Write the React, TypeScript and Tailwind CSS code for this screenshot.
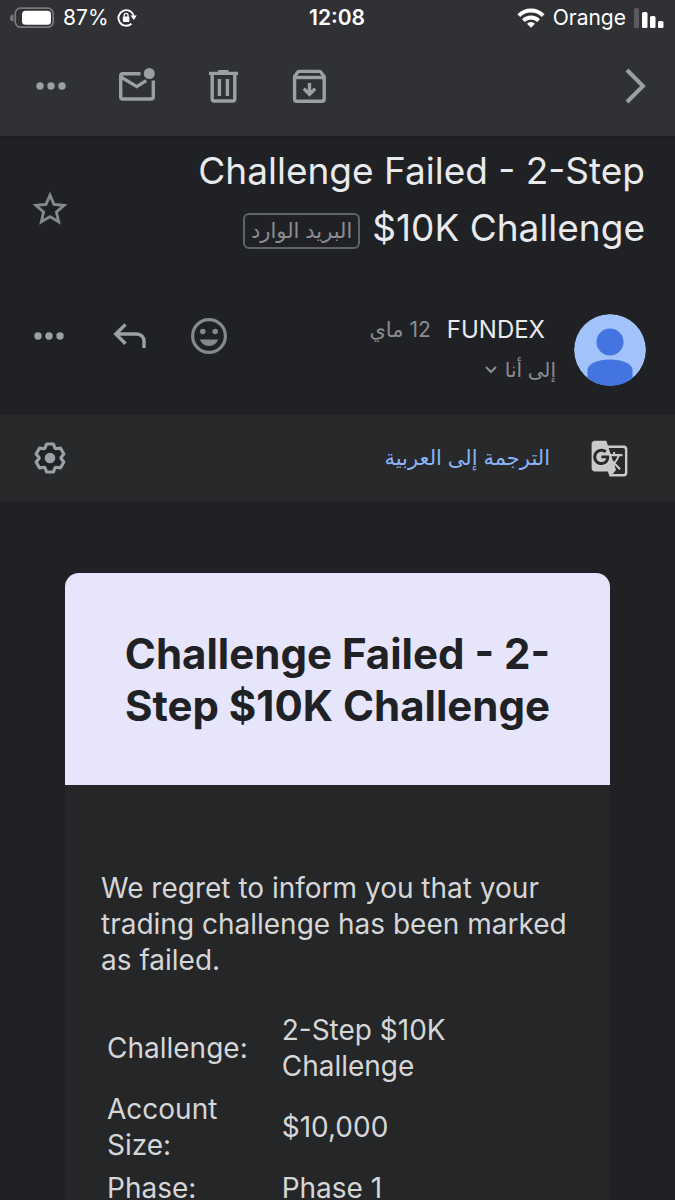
import React from 'react';
import { MdGTranslate, MdStarOutline } from 'react-icons/md';

const details = [
  { label: 'Challenge:', value: '2-Step $10K Challenge' },
  { label: 'Account Size:', value: '$10,000' },
  { label: 'Phase:', value: 'Phase 1' },
];

// One tooth of the settings gear, repeated every 60 degrees
const tooth = [
  [-5, -9.8],
  [-3.4, -14],
  [3.4, -14],
  [5, -9.8],
];

const gearPoints = Array.from({ length: 6 }, (_, i) => {
  const a = (i * Math.PI) / 3;
  return tooth
    .map(([x, y]) => `${x * Math.cos(a) - y * Math.sin(a)},${x * Math.sin(a) + y * Math.cos(a)}`)
    .join(' ');
}).join(' ');

const DotsIcon = () => (
  <svg width="30" height="8" viewBox="0 0 30 8" fill="currentColor">
    <circle cx="4" cy="4" r="3.7" />
    <circle cx="15" cy="4" r="3.7" />
    <circle cx="26" cy="4" r="3.7" />
  </svg>
);

const UnreadIcon = () => (
  <svg width="38" height="38" viewBox="118 67 38 38" fill="none" stroke="currentColor" strokeWidth="3.4">
    <path d="M140.5 73.7H123a2.3 2.3 0 0 0-2.3 2.3V96.700a2.3 2.3 0 0 0 2.3 2.3h28a2.3 2.3 0 0 0 2.3-2.3V80.500" />
    <path d="M121 77l15.800 9.600 9.400-6" />
    <circle cx="149.3" cy="73.5" r="5.5" fill="currentColor" stroke="none" />
  </svg>
);

const TrashIcon = () => (
  <svg width="34" height="36" viewBox="206 68 34 36" fill="none" stroke="currentColor" strokeWidth="3.4">
    <path d="M209 73.400h29M218 71.600h10.500" />
    <path d="M212.2 74v24.800a2.2 2.2 0 0 0 2.2 2.2h18.200a2.2 2.2 0 0 0 2.2-2.2V74" />
    <path d="M219.4 79v17M227.4 79v17" />
  </svg>
);

const ArchiveIcon = () => (
  <svg width="36" height="36" viewBox="291 68 36 36" fill="none" stroke="currentColor" strokeWidth="3.4">
    <path d="M294.6 76.500l3.200-4.500a1.500 1.500 0 0 1 1.200-.6h20.500a1.500 1.500 0 0 1 1.200.6l3.500 4.500V99a2.300 2.300 0 0 1-2.300 2.300h-25a2.300 2.300 0 0 1-2.300-2.300z" />
    <path d="M295 77.500h29" />
    <path d="M309.5 83v10M303.800 88.600l5.700 5.700 5.700-5.700" />
  </svg>
);

const ReplyIcon = () => (
  <svg width="34" height="34" viewBox="0 0 34 34" fill="none" stroke="currentColor" strokeWidth="3.4">
    <path d="M13.5 5.500L3.800 15l9.700 9.700M4 15h21a7 7 0 0 1 7 7v7" />
  </svg>
);

const SmileIcon = () => (
  <svg width="38" height="38" viewBox="0 0 38 38">
    <circle cx="19" cy="19" r="16.4" fill="none" stroke="currentColor" strokeWidth="3.2" />
    <circle cx="12.8" cy="14.5" r="2.8" fill="currentColor" />
    <circle cx="25.2" cy="14.5" r="2.8" fill="currentColor" />
    <path d="M9.800 22.500h18.400a9.800 9.800 0 0 1-18.400 0z" fill="currentColor" />
  </svg>
);

const GearIcon = () => (
  <svg width="34" height="34" viewBox="-17 -17 34 34">
    <polygon points={gearPoints} fill="#202124" stroke="currentColor" strokeWidth="3.2" strokeLinejoin="round" />
    <circle r="5.3" fill="currentColor" />
  </svg>
);

const StatusBar = () => (
  <div dir="ltr" className="grid h-9 grid-cols-3 items-center pl-[10px] pr-[11px] text-[21px] leading-6 text-white">
    <div className="flex items-center gap-2">
      <svg width="45" height="22" viewBox="10 7 45 22">
        <path d="M13.500 14.500a3.500 3.500 0 0 0 0 7z" fill="#77787b" />
        <rect x="15.2" y="8.2" width="38" height="19" rx="5.5" fill="none" stroke="#77787b" strokeWidth="1.8" />
        <rect x="22" y="10.7" width="29" height="14" rx="3.5" fill="#fff" />
      </svg>
      <span>87%</span>
      <svg width="20" height="20" viewBox="0 0 20 20">
        <path d="M14.500 15.700A7.800 7.800 0 1 1 16.800 8" fill="none" stroke="#fff" strokeWidth="1.9" />
        <path d="M13.500 7.500h6.300l-3 4.600z" fill="#fff" />
        <rect x="5.8" y="8.6" width="6.6" height="5.4" rx="1" fill="#fff" />
        <path d="M7.200 9V7.300a1.900 1.900 0 0 1 3.800 0V9" fill="none" stroke="#fff" strokeWidth="1.3" />
      </svg>
    </div>
    <time className="text-center font-semibold">12:08</time>
    <div className="flex items-center justify-end gap-2">
      <svg width="28" height="20" viewBox="0 0 28 20" fill="none" stroke="#fff" strokeWidth="4">
        <path d="M1.800 7.600a17.300 17.300 0 0 1 24.400 0" />
        <path d="M6.400 12.600a10.800 10.800 0 0 1 15.200 0" />
        <path d="M14 19.800l-4-4a5.600 5.600 0 0 1 8 0z" fill="#fff" stroke="none" />
      </svg>
      <span>Orange</span>
      <svg width="30" height="20" viewBox="0 0 30 20" fill="#fff">
        <rect x="0" y="0" width="5" height="20" rx="1.5" fill="#5a5b5e" />
        <rect x="8" y="4" width="5.5" height="16" rx="1.5" />
        <rect x="16" y="8" width="5.5" height="12" rx="1.5" />
        <rect x="24" y="13" width="5.5" height="7" rx="1.5" />
      </svg>
    </div>
  </div>
);

const Toolbar = () => (
  <nav dir="ltr" className="flex h-[100px] items-center justify-between pl-[31px] pr-5 text-[#9aa0a6]">
    <div className="flex items-center gap-[46px]">
      <button aria-label="More" className="flex w-10 justify-center"><DotsIcon /></button>
      <button aria-label="Mark unread" className="flex w-10 justify-center"><UnreadIcon /></button>
      <button aria-label="Delete" className="flex w-10 justify-center"><TrashIcon /></button>
      <button aria-label="Archive" className="flex w-10 justify-center"><ArchiveIcon /></button>
    </div>
    <button aria-label="Next" className="flex w-10 justify-center">
      <svg width="24" height="38" viewBox="0 0 24 38" fill="none" stroke="currentColor" strokeWidth="4">
        <path d="M4 3l16 16L4 35" />
      </svg>
    </button>
  </nav>
);

const MessageHeader = () => (
  <section className="flex items-center justify-between px-[29px] pt-[58px] pb-[29px]">
    <div className="flex items-center gap-[18px]">
      <svg width="72" height="72" viewBox="0 0 72 72" className="rounded-full">
        <circle cx="36" cy="36" r="36" fill="#a1c2fa" />
        <circle cx="36" cy="28" r="13.5" fill="#4374e0" />
        <path d="M13.500 72V56c0-6 10-10.500 22.500-10.500S58.500 50 58.500 56v16z" fill="#4374e0" />
      </svg>
      <div>
        <div className="flex items-center gap-4 pr-[11px]">
          <span className="text-2xl leading-8 text-[#e8eaed]">FUNDEX</span>
          <span className="text-[21px] leading-8 text-[#8a8d91]">12 ماي</span>
        </div>
        <button className="mt-2 flex items-center gap-2 text-xl leading-8 text-[#8a8d91]">
          إلى أنا
          <svg width="12" height="8" viewBox="0 0 12 8" fill="none" stroke="currentColor" strokeWidth="2">
            <path d="M1 1l5 5 5-5" />
          </svg>
        </button>
      </div>
    </div>
    <div dir="ltr" className="flex items-center gap-10 pb-7 text-[#9aa0a6]">
      <button aria-label="More" className="flex w-10 justify-center"><DotsIcon /></button>
      <button aria-label="Reply" className="flex w-10 justify-center"><ReplyIcon /></button>
      <button aria-label="React" className="flex w-10 justify-center text-[#85888c]"><SmileIcon /></button>
    </div>
  </section>
);

const EmailCard = () => (
  <article dir="ltr" className="mx-[65px] mt-[72px] overflow-hidden rounded-t-[14px] bg-[#252628]">
    <header className="bg-[#e7e5fb] px-10 pt-[55px] pb-[53px]">
      <h2 className="text-center text-[42px] leading-[52px] font-bold text-[#202124]">
        Challenge Failed - 2-Step $10K Challenge
      </h2>
    </header>
    <div className="px-9 pt-[85px] text-[28px] leading-9 text-[#d5d6d8]">
      <p>We regret to inform you that your trading challenge has been marked as failed.</p>
      <table className="mt-[29px] w-full table-fixed border-separate border-spacing-[3px]">
        <tbody>
          {details.map((row) => (
            <tr key={row.label}>
              <th scope="row" className="w-[37%] py-[2px] pr-6 pl-[3px] text-left font-normal">{row.label}</th>
              <td className="py-[2px] pr-16 pl-[3px]">{row.value}</td>
            </tr>
          ))}
        </tbody>
      </table>
    </div>
  </article>
);

const App = () => {
  return (
    <div dir="rtl" className="min-h-screen bg-[#202124] font-['Inter','DejaVu_Sans',sans-serif]">
      <header className="border-b border-[#1b1c1e] bg-[#303134]">
        <StatusBar />
        <Toolbar />
      </header>

      <section className="flex items-center justify-between pt-[5px] pr-[30px] pl-[29px]">
        <h1 className="max-w-[480px] text-[37px] leading-[57px] text-[#e8eaed]">
          Challenge Failed - 2-Step $10K Challenge
          <span className="mr-3 inline-block rounded-md border-2 border-[#5f6368] px-[6px] align-middle text-[21px] leading-8 text-[#8a8d91]">
            البريد الوارد
          </span>
        </h1>
        <button aria-label="Star" className="pt-5 text-[#85888c]">
          <MdStarOutline size={42} />
        </button>
      </section>

      <MessageHeader />

      <section className="flex h-[86px] items-center justify-between bg-[#28292a] pr-[46px] pl-[33px]">
        <div className="flex items-center gap-10">
          <MdGTranslate size={39} className="text-[#c8cacc]" />
          <a href="#translate" className="text-[21px] leading-8 text-[#8ab4f8]">الترجمة إلى العربية</a>
        </div>
        <button aria-label="Translation settings" className="text-[#9aa0a6]"><GearIcon /></button>
      </section>

      <EmailCard />
    </div>
  );
};

export default App;
